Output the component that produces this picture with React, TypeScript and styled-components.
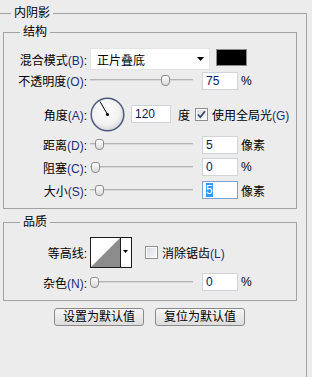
import styled, { createGlobalStyle } from 'styled-components';

const GlobalStyle = createGlobalStyle`
  html, body {
    margin: 0;
    padding: 0;
    background: #ececec;
    overflow: hidden;
  }
  body {
    font-family: 'Liberation Sans', 'Noto Sans CJK SC', sans-serif;
    font-size: 12px;
    color: #000;
  }
`;

const Page = styled.div`
  width: 312px;
  height: 377px;
  padding-top: 6px;
  box-sizing: border-box;
  overflow: hidden;
`;

const OuterSet = styled.fieldset`
  box-sizing: border-box;
  width: 307px;
  height: 420px;
  margin: 0;
  padding: 0 9px 0 3px;
  border: 1px solid #a2a2a2;
  border-left: none;
  min-width: 0;
`;

const Legend = styled.legend<{ $offset: number }>`
  margin-left: ${(p) => p.$offset}px;
  padding: 0 3px;
  height: 14px;
  line-height: 14px;
  font-size: 12px;
`;

const GroupSet = styled.fieldset<{ $mt: number; $pt: number; $pb: number }>`
  margin: ${(p) => p.$mt}px 0 0;
  padding: ${(p) => p.$pt}px 0 ${(p) => p.$pb}px;
  border: 1px solid #a2a2a2;
  min-width: 0;
`;

const Row = styled.div<{ $h: number; $mt?: number }>`
  display: flex;
  align-items: center;
  height: ${(p) => p.$h}px;
  margin-top: ${(p) => p.$mt ?? 0}px;
`;

const Label = styled.div`
  flex-shrink: 0;
  width: 83px;
  margin-right: 3px;
  text-align: right;
  white-space: nowrap;
`;

const Key = styled.span`
  color: #1b2c78;
`;

const Dropdown = styled.div`
  box-sizing: border-box;
  display: flex;
  align-items: center;
  justify-content: space-between;
  width: 120px;
  height: 22px;
  padding: 0 5px 0 6px;
  background: #fff;
  border: 1px solid #e4e4e4;
`;

const Swatch = styled.div`
  box-sizing: border-box;
  align-self: flex-start;
  width: 31px;
  height: 17px;
  margin: 1px 0 0 6px;
  background: #000;
  border: 1px solid #8a8a8a;
`;

const SliderTrack = styled.div`
  position: relative;
  flex-shrink: 0;
  width: 103px;
  height: 19px;
  margin-right: 9px;

  &::before {
    content: '';
    position: absolute;
    left: 0;
    right: 0;
    top: 8px;
    height: 1px;
    background: #b4b4b4;
    border-bottom: 1px solid #d8d8d8;
  }
`;

const Thumb = styled.div`
  position: absolute;
  top: 4px;
  box-sizing: border-box;
  width: 9px;
  height: 11px;
  border: 1px solid #8c8c8c;
  border-radius: 3px 3px 4px 4px;
  background: linear-gradient(#fdfdfd, #dadada);
`;

const NumBox = styled.div<{ $w?: number; $focus?: boolean }>`
  box-sizing: border-box;
  flex-shrink: 0;
  width: ${(p) => p.$w ?? 36}px;
  height: 18px;
  padding-left: 3px;
  line-height: 16px;
  background: #fff;
  border: 1px solid ${(p) => (p.$focus ? '#7ba3d3' : '#d0d4d9')};
  color: #0c1a5a;
`;

const Selected = styled.span`
  background: #3399ff;
  color: #fff;
`;

const Unit = styled.span<{ $ml?: number }>`
  margin-left: ${(p) => p.$ml ?? 3}px;
  white-space: nowrap;
`;

const CheckText = styled.span`
  margin-left: 4px;
  white-space: nowrap;
`;

const CheckWrap = styled.span<{ $ml: number }>`
  display: inline-flex;
  margin-left: ${(p) => p.$ml}px;
`;

const ButtonBar = styled.div`
  display: flex;
  gap: 11px;
  margin-top: 7px;
  padding-left: 51px;
`;

const PushButton = styled.button`
  box-sizing: border-box;
  width: 90px;
  height: 18px;
  padding: 0;
  border: 1px solid #8a8a8a;
  border-radius: 3px;
  background: linear-gradient(#f7f7f7, #dcdcdc);
  font-family: inherit;
  font-size: 12px;
  line-height: 16px;
  color: #000;
`;

const Slider = ({ value }: { value: number }) => (
  <SliderTrack>
    <Thumb style={{ left: Math.round(value * (103 - 9)) }} />
  </SliderTrack>
);

const Checkbox = ({ checked, ml }: { checked?: boolean; ml: number }) => (
  <CheckWrap $ml={ml}>
    <svg width="13" height="13" viewBox="0 0 13 13">
      <defs>
        <linearGradient id={checked ? 'cbOn' : 'cbOff'} x1="0" y1="0" x2="1" y2="1">
          <stop offset="0" stopColor="#d9dde3" />
          <stop offset="1" stopColor="#f7f7f7" />
        </linearGradient>
      </defs>
      <rect x="0.5" y="0.5" width="12" height="12" fill="#fff" stroke="#8e8f8f" />
      <rect x="2" y="2" width="9" height="9" fill={`url(#${checked ? 'cbOn' : 'cbOff'})`} />
      {checked && (
        <path d="M3 6.5 L5.3 9 L10 3.2" fill="none" stroke="#3b4a6b" strokeWidth="1.8" />
      )}
    </svg>
  </CheckWrap>
);

const Dial = ({ angle }: { angle: number }) => {
  const rad = (angle * Math.PI) / 180;
  const x = 17.5 + Math.cos(rad) * 15;
  const y = 17.5 - Math.sin(rad) * 15;
  return (
    <svg width="35" height="35" viewBox="0 0 35 35" style={{ marginRight: 6, flexShrink: 0 }}>
      <defs>
        <radialGradient id="dialFill" cx="0.45" cy="0.4" r="0.6">
          <stop offset="0" stopColor="#ffffff" />
          <stop offset="0.7" stopColor="#f1f1f1" />
          <stop offset="1" stopColor="#d6d6d6" />
        </radialGradient>
      </defs>
      <circle cx="17.5" cy="17.5" r="16.3" fill="url(#dialFill)" stroke="#4c5b7d" strokeWidth="1.5" />
      <line x1="17.5" y1="17.5" x2={x} y2={y} stroke="#000" strokeWidth="1" />
      <circle cx="17.5" cy="17.5" r="1.6" fill="#000" />
    </svg>
  );
};

const ContourPicker = () => (
  <svg width="42" height="31" viewBox="0 0 42 31" style={{ flexShrink: 0 }}>
    <rect x="0.5" y="0.5" width="41" height="30" fill="#fff" stroke="#1e1e1e" />
    <polygon points="1,30 30,1 30,30" fill="#8c8c8c" />
    <line x1="30.5" y1="1" x2="30.5" y2="30" stroke="#1e1e1e" />
    <polygon points="33,13 38,13 35.5,16" fill="#000" />
  </svg>
);

const DropArrow = () => (
  <svg width="7" height="4" viewBox="0 0 7 4">
    <polygon points="0,0 7,0 3.5,4" fill="#000" />
  </svg>
);

const App = () => (
  <Page>
    <GlobalStyle />
    <OuterSet>
      <Legend $offset={8}>内阴影</Legend>

      <GroupSet $mt={5} $pt={9} $pb={9}>
        <Legend $offset={16}>结构</Legend>
        <Row $h={22}>
          <Label>
            混合模式<Key>(B)</Key>:
          </Label>
          <Dropdown>
            <span>正片叠底</span>
            <DropArrow />
          </Dropdown>
          <Swatch />
        </Row>
        <Row $h={19} $mt={1}>
          <Label>
            不透明度<Key>(O)</Key>:
          </Label>
          <Slider value={0.76} />
          <NumBox>75</NumBox>
          <Unit>%</Unit>
        </Row>
        <Row $h={34} $mt={7}>
          <Label>
            角度<Key>(A)</Key>:
          </Label>
          <Dial angle={120} />
          <NumBox $w={40}>120</NumBox>
          <Unit $ml={7}>度</Unit>
          <Checkbox checked ml={5} />
          <CheckText>
            使用全局光<Key>(G)</Key>
          </CheckText>
        </Row>
        <Row $h={19} $mt={4}>
          <Label>
            距离<Key>(D)</Key>:
          </Label>
          <Slider value={0.05} />
          <NumBox>5</NumBox>
          <Unit>像素</Unit>
        </Row>
        <Row $h={18} $mt={4}>
          <Label>
            阻塞<Key>(C)</Key>:
          </Label>
          <Slider value={0.01} />
          <NumBox>0</NumBox>
          <Unit>%</Unit>
        </Row>
        <Row $h={18} $mt={5}>
          <Label>
            大小<Key>(S)</Key>:
          </Label>
          <Slider value={0.05} />
          <NumBox $focus>
            <Selected>5</Selected>
          </NumBox>
          <Unit>像素</Unit>
        </Row>
      </GroupSet>

      <GroupSet $mt={6} $pt={8} $pb={9}>
        <Legend $offset={16}>品质</Legend>
        <Row $h={31}>
          <Label>等高线:</Label>
          <ContourPicker />
          <Checkbox ml={13} />
          <CheckText>
            消除锯齿<Key>(L)</Key>
          </CheckText>
        </Row>
        <Row $h={18} $mt={5}>
          <Label>
            杂色<Key>(N)</Key>:
          </Label>
          <Slider value={0} />
          <NumBox>0</NumBox>
          <Unit>%</Unit>
        </Row>
      </GroupSet>

      <ButtonBar>
        <PushButton>设置为默认值</PushButton>
        <PushButton>复位为默认值</PushButton>
      </ButtonBar>
    </OuterSet>
  </Page>
);

export default App;
